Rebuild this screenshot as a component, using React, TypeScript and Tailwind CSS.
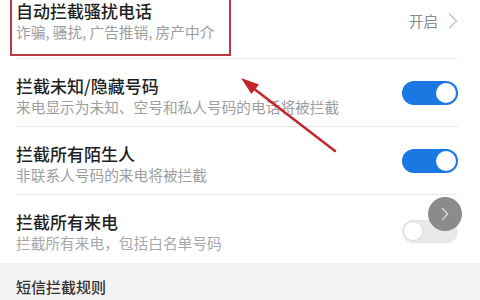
import React from 'react';

const font = { fontFamily: '"Noto Sans CJK SC", "Noto Sans", sans-serif' };

function Toggle({ on }: { on: boolean }) {
  if (on) {
    return (
      <div className="w-[56px] h-[24px] rounded-full bg-[#1b78e2] flex items-center justify-end px-[2px] mb-2 shrink-0">
        <div className="w-[20px] h-[20px] rounded-full bg-white" />
      </div>
    );
  }
  return (
    <div className="w-[56px] h-[23px] rounded-full bg-[#e8e8e8] flex items-center justify-start px-[1px] mb-1 shrink-0">
      <div className="w-[20px] h-[20px] rounded-full bg-white border border-[#dcdcdc]" />
    </div>
  );
}

function Row({ title, desc, on, last }: { title: string; desc: string; on: boolean; last?: boolean }) {
  return (
    <div
      className={`ml-4 mr-[22px] flex items-center justify-between pt-[17px] pb-[8px] ${
        last ? '' : 'border-b border-[#e8e8e8]'
      }`}
    >
      <div>
        <div className="text-[17px] leading-[20px] font-medium text-[#1f1f1f]">{title}</div>
        <div className={`text-[14.7px] leading-[22px] ${last ? 'text-[#a8a8a8]' : 'text-[#9e9e9e]'}`}>{desc}</div>
      </div>
      <Toggle on={on} />
    </div>
  );
}

export default function App() {
  return (
    <div className="relative w-[480px] h-[300px] overflow-hidden bg-white" style={font}>
      {/* first row */}
      <div className="ml-4 mr-[22px] flex items-center justify-between pt-[1px] pb-[15px] border-b border-[#e8e8e8]">
        <div>
          <div className="text-[17px] leading-[20px] font-medium text-[#1f1f1f]">自动拦截骚扰电话</div>
          <div className="text-[14.7px] leading-[22px] text-[#9e9e9e]">诈骗, 骚扰, 广告推销, 房产中介</div>
        </div>
        <div className="flex items-center gap-[10px] text-[14.5px] text-[#8a8a8a] mb-[3px]">
          <span>开启</span>
          <svg width="10" height="16" viewBox="0 0 10 16" fill="none">
            <path d="M1.5 1 L8.5 8 L1.5 15" stroke="#c4c4c4" strokeWidth="1.5" strokeLinecap="round" strokeLinejoin="round" />
          </svg>
        </div>
      </div>

      <Row title="拦截未知/隐藏号码" desc="来电显示为未知、空号和私人号码的电话将被拦截" on />
      <Row title="拦截所有陌生人" desc="非联系人号码的来电将被拦截" on />
      <Row title="拦截所有来电" desc="拦截所有来电，包括白名单号码" on={false} last />

      <div className="bg-[#f3f3f3] mt-[1px] pt-[14px] pb-4 px-4 h-full">
        <div className="text-[15px] leading-[20px] font-medium text-[#333]">短信拦截规则</div>
      </div>

      {/* annotation: red box */}
      <div className="absolute left-[10px] top-[-4px] w-[221px] h-[60px] border-2 border-[#bb3a44] pointer-events-none" />

      {/* annotation: arrow */}
      <svg className="absolute inset-0 pointer-events-none" width="480" height="300" viewBox="0 0 480 300">
        <line x1="335" y1="151" x2="253" y2="88" stroke="#c4262c" strokeWidth="2.5" strokeLinecap="round" />
        <polygon points="241,78 259,84.5 251.4,94" fill="#c4262c" />
      </svg>

      {/* floating button */}
      <div className="absolute left-[428px] top-[197px] w-[34px] h-[34px] rounded-full bg-[#8b8b8b] flex items-center justify-center">
        <svg width="10" height="14" viewBox="0 0 10 14" fill="none">
          <path d="M2.5 1.5 L7.5 7 L2.5 12.5" stroke="#d6d6d6" strokeWidth="1.5" strokeLinecap="round" strokeLinejoin="round" />
        </svg>
      </div>
    </div>
  );
}
